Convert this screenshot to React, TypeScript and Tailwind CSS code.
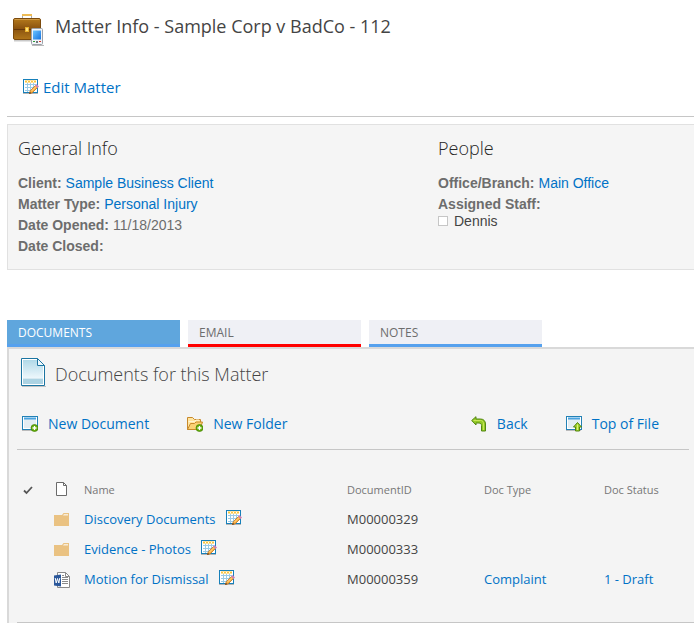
import type { ReactNode } from 'react'

type TDocument = {
  name: string
  kind: 'folder' | 'word'
  id: string
  type?: string
  status?: string
}

const documents: TDocument[] = [
  { name: 'Discovery Documents', kind: 'folder', id: 'M00000329' },
  { name: 'Evidence - Photos', kind: 'folder', id: 'M00000333' },
  {
    name: 'Motion for Dismissal',
    kind: 'word',
    id: 'M00000359',
    type: 'Complaint',
    status: '1 - Draft',
  },
]

function BriefcaseIcon() {
  return (
    <svg width="32" height="32" viewBox="0 0 32 32" aria-hidden="true">
      <defs>
        <linearGradient id="leather" x1="0" y1="0" x2="0" y2="1">
          <stop offset="0" stopColor="#b57a1c" />
          <stop offset="0.45" stopColor="#8d5510" />
          <stop offset="0.5" stopColor="#8a5310" />
          <stop offset="1" stopColor="#b0761a" />
        </linearGradient>
        <linearGradient id="screen" x1="0" y1="0" x2="1" y2="1">
          <stop offset="0" stopColor="#6cc4ff" />
          <stop offset="1" stopColor="#1674e0" />
        </linearGradient>
      </defs>
      <path d="M9.500 5V1h9v4" fill="none" stroke="#a9a9a9" />
      <path d="M9 1h10" stroke="#eebc55" strokeWidth="2" />
      <rect x="1" y="26" width="28" height="1.500" fill="#c9c9c9" />
      <rect x="0.500" y="4.500" width="27" height="21" rx="1.500" fill="url(#leather)" stroke="#7b4a0d" />
      <path d="M1.500 5.500h25" stroke="#cf9a45" />
      <path d="M1 15.500h26" stroke="#64370a" />
      <rect x="12.500" y="13.500" width="3" height="4" fill="#ffe27a" stroke="#e9b02c" />
      <path d="M19 31.500h12" stroke="#b9b9b9" />
      <rect x="18.500" y="14.500" width="11" height="16" rx="1" fill="#f2f4f7" stroke="#9aa1aa" />
      <rect x="20" y="16.500" width="8" height="9" fill="url(#screen)" />
      <path d="M20 27.500h2" stroke="#2d9c37" />
      <path d="M23 28h2" stroke="#707880" strokeWidth="2" />
      <path d="M26 27.500h2" stroke="#d7372a" />
    </svg>
  )
}

function EditIcon() {
  return (
    <svg width="16" height="16" viewBox="0 0 16 16" aria-hidden="true">
      <rect x="0.500" y="0.500" width="14" height="13" fill="#fff" stroke="#1780ba" />
      <path d="M0 14.500h15" stroke="#b5b5b5" />
      <path d="M2 2.500h11" stroke="#fac53b" strokeWidth="2" />
      <path d="M2 5.500h11M2 8.500h11M2 11.500h8M4.500 4v9M7.500 4v9M10.500 4v6" stroke="#9bcbe5" />
      <path d="M4.500 2v1M7.500 2v1M10.500 2v1" stroke="#fff" />
      <path d="M6.500 14.500l0.800-2.800 5.200-5.200 2 2-5.200 5.200z" fill="#fbb040" stroke="#bf7420" strokeWidth="0.800" />
      <path d="M8.300 12.300l4.700-4.700" stroke="#ffe0a0" strokeWidth="0.800" />
      <path d="M6 15l0.900-2.200 1.400 1.400z" fill="#684421" />
      <path d="M12 6.500L13.500 5 16 7.500l-1.500 1.500z" fill="#cc83b5" />
    </svg>
  )
}

function PageIcon() {
  return (
    <svg width="26" height="30" viewBox="0 0 26 30" aria-hidden="true">
      <defs>
        <linearGradient id="paper" x1="0" y1="0" x2="0" y2="1">
          <stop offset="0" stopColor="#b0d9e8" />
          <stop offset="1" stopColor="#edf7fc" />
        </linearGradient>
      </defs>
      <path d="M1 28.500h24" stroke="#c2c2c2" />
      <path d="M0.500 0.500h16l7 7v20h-23z" fill="#fff" stroke="#1b75a2" />
      <path d="M2 2h14v6h6v12H2z" fill="url(#paper)" />
      <path d="M2 20.500h20V26H2z" fill="#acd3e3" />
      <path d="M16.500 0.500v7h7z" fill="#eff8fc" stroke="#1b75a2" />
    </svg>
  )
}

function PlusBadge() {
  return (
    <>
      <circle cx="12.500" cy="12" r="3.500" fill="#66ad0c" stroke="#418100" strokeWidth="0.700" />
      <path d="M10.500 12h4M12.500 10v4" stroke="#fff" strokeWidth="1.300" />
    </>
  )
}

function WindowFrame() {
  return (
    <>
      <path d="M0 14.500h15" stroke="#bbb" />
      <rect x="0.500" y="0.500" width="15" height="13" fill="#e4edf2" stroke="#2381b5" />
      <rect x="1.500" y="1.500" width="13" height="11" fill="none" stroke="#fff" />
      <path d="M2 2.500h12" stroke="#49a3e0" strokeWidth="2" />
    </>
  )
}

function NewDocumentIcon() {
  return (
    <svg width="16" height="16" viewBox="0 0 16 16" aria-hidden="true">
      <WindowFrame />
      <PlusBadge />
    </svg>
  )
}

function NewFolderIcon() {
  return (
    <svg width="16" height="16" viewBox="0 0 16 16" aria-hidden="true">
      <path d="M0.500 13.500v-12h5l2 2h6v10z" fill="#ffe5a0" stroke="#c8892b" />
      <path d="M1.500 5.500h6l1.500-1.500h3" fill="none" stroke="#fff4d4" />
      <path d="M0.500 13.500l3-6h4l1.500-1.500h6.500l-2.500 7.500z" fill="#f9d274" stroke="#c8892b" />
      <PlusBadge />
    </svg>
  )
}

function BackIcon() {
  return (
    <svg width="16" height="16" viewBox="0 0 16 16" aria-hidden="true">
      <path
        d="M0.700 4.500L5 0.700V3h4.500c3 0 5 2 5 5v7h-4V9.500c0-1.500-1-2.500-2.500-2.500H5v2z"
        fill="#94c927"
        stroke="#528711"
      />
      <path d="M2.500 4.500h7c2 0 3 1.500 3 3.500v6" fill="none" stroke="#c6e758" />
    </svg>
  )
}

function TopOfFileIcon() {
  return (
    <svg width="16" height="16" viewBox="0 0 16 16" aria-hidden="true">
      <WindowFrame />
      <path
        d="M11.500 6.500l4 4.500h-2v4h-4v-4h-2z"
        fill="#a3d329"
        stroke="#518410"
      />
      <path d="M11.500 8.500v5.500" stroke="#d8ef78" />
    </svg>
  )
}

function CheckIcon() {
  return (
    <svg width="10" height="10" viewBox="0 0 10 10" aria-hidden="true">
      <path d="M1 4.500l2.500 2.500L9 1" fill="none" stroke="#555" strokeWidth="1.800" />
    </svg>
  )
}

function BlankFileIcon() {
  return (
    <svg width="12" height="14" viewBox="0 0 12 14" aria-hidden="true">
      <path d="M0.500 0.500h7l3 3v10h-10z" fill="#fff" stroke="#6b6b6b" />
      <path d="M7.500 0.500v3h3" fill="none" stroke="#6b6b6b" />
    </svg>
  )
}

function FolderIcon() {
  return (
    <svg width="16" height="14" viewBox="0 0 16 14" aria-hidden="true">
      <path d="M0 2h8l1.500-2H15v13H0z" fill="#eac282" />
      <path d="M9 2.500l1-1.500h4v1.500z" fill="#f8ecd8" />
    </svg>
  )
}

function WordIcon() {
  return (
    <svg width="16" height="16" viewBox="0 0 16 16" aria-hidden="true">
      <path d="M3.500 0.500h8l4 4v11h-12z" fill="#fff" stroke="#898989" />
      <path d="M11.500 0.500v4h4" fill="none" stroke="#898989" />
      <path d="M8 3.500h2M8 5.500h6M8 7.500h6M8 9.500h6M8 11.500h6" stroke="#8b8b8b" />
      <path d="M0 3.500l7-1v12l-7-1z" fill="#2a579a" />
      <path d="M1.200 6l1 5 1.300-4.500L4.800 11l1-5" fill="none" stroke="#fff" />
    </svg>
  )
}

function TextLink({ children }: { children: ReactNode }) {
  return (
    <a href="#" className="text-[#0072c6]">
      {children}
    </a>
  )
}

function Field({ label, children }: { label: string; children?: ReactNode }) {
  return (
    <div className="flex gap-x-1">
      <dt className="font-bold">{label}</dt>
      <dd>{children}</dd>
    </div>
  )
}

function ToolLink({ icon, label }: { icon: ReactNode; label: string }) {
  return (
    <a href="#" className="flex items-center gap-x-2.5 text-[#0072c6]">
      {icon}
      {label}
    </a>
  )
}

export default function App() {
  return (
    <main className="min-h-screen bg-white pl-[7px] font-['Open_Sans',sans-serif] text-[#444]">
      <header className="border-b border-[#c6c6c6] pt-3 pb-[15px]">
        <div className="flex items-center gap-x-2.5 pl-1.5">
          <BriefcaseIcon />
          <h1 className="pb-2 text-lg leading-7">
            Matter Info - Sample Corp v BadCo - 112
          </h1>
        </div>
        <a
          href="#"
          className="mt-[27px] ml-4 inline-flex items-center gap-x-1 text-[15px] leading-6 text-[#0072c6]"
        >
          <EditIcon />
          Edit Matter
        </a>
      </header>

      <section className="mt-[7px] flex border border-r-0 border-[#e1e1e1] bg-[#f5f5f5] px-2.5 pt-[9px] pb-3 font-['Liberation_Sans',sans-serif] text-sm text-[#6d6d6d]">
        <div className="w-[420px] shrink-0">
          <h2 className="mb-[11px] font-['Open_Sans',sans-serif] text-lg leading-7 font-light text-[#262626]">
            General Info
          </h2>
          <dl className="leading-[21px]">
            <Field label="Client:">
              <TextLink>Sample Business Client</TextLink>
            </Field>
            <Field label="Matter Type:">
              <TextLink>Personal Injury</TextLink>
            </Field>
            <Field label="Date Opened:">11/18/2013</Field>
            <Field label="Date Closed:" />
          </dl>
        </div>
        <div>
          <h2 className="mb-[11px] font-['Open_Sans',sans-serif] text-lg leading-7 font-light text-[#262626]">
            People
          </h2>
          <dl className="leading-[21px]">
            <Field label="Office/Branch:">
              <TextLink>Main Office</TextLink>
            </Field>
            <Field label="Assigned Staff:" />
          </dl>
          <label className="flex items-center gap-x-1.5 leading-3 text-[#444]">
            <input
              type="checkbox"
              className="size-2.5 appearance-none border border-[#c6c6c6] bg-white"
            />
            Dennis
          </label>
        </div>
      </section>

      <nav className="mt-[50px] flex gap-x-2 text-xs text-[#6d6d6d]">
        <button className="h-[27px] w-[173px] border-b-3 border-[#56a1ee] bg-[#5fa6dd] px-[11px] pt-0.5 text-left text-white">
          DOCUMENTS
        </button>
        <button className="h-[27px] w-[173px] border-b-3 border-[#f00] bg-[#eff0f5] px-[11px] pt-0.5 text-left">
          EMAIL
        </button>
        <button className="h-[27px] w-[173px] border-b-3 border-[#56a1ee] bg-[#eff0f5] px-[11px] pt-0.5 text-left">
          NOTES
        </button>
      </nav>

      <section className="border-t-2 border-l-2 border-[#d9d9d9] bg-[#f4f4f4] pl-2">
        <div className="flex items-center gap-x-2 pt-[7px] pl-1">
          <PageIcon />
          <h2 className="pt-0.5 text-lg leading-8 font-light">
            Documents for this Matter
          </h2>
        </div>
        <div className="mr-[5px] flex justify-between border-b border-[#c6c6c6] pt-[22px] pr-[30px] pb-[13px] pl-[5px] text-sm leading-6">
          <div className="flex gap-x-[38px]">
            <ToolLink icon={<NewDocumentIcon />} label="New Document" />
            <ToolLink icon={<NewFolderIcon />} label="New Folder" />
          </div>
          <div className="flex gap-x-[38px]">
            <ToolLink icon={<BackIcon />} label="Back" />
            <ToolLink icon={<TopOfFileIcon />} label="Top of File" />
          </div>
        </div>

        <div className="border-b border-[#c6c6c6] pt-[26px] pb-[27px]">
          <table className="w-full table-fixed text-left text-[13px]">
            <thead className="text-[11px] text-[#777]">
              <tr className="h-[29px]">
                <th className="w-[35px] pl-1.5" aria-label="Select">
                  <CheckIcon />
                </th>
                <th className="w-8 pb-1 pl-1" aria-label="Type">
                  <BlankFileIcon />
                </th>
                <th className="font-normal">Name</th>
                <th className="w-[137px] font-normal">DocumentID</th>
                <th className="w-[120px] font-normal">Doc Type</th>
                <th className="w-[90px] font-normal">Doc Status</th>
              </tr>
            </thead>
            <tbody>
              {documents.map((doc) => (
                <tr key={doc.id} className="h-[30px]">
                  <td />
                  <td className="pl-0.5">
                    {doc.kind === 'folder' ? <FolderIcon /> : <WordIcon />}
                  </td>
                  <td>
                    <div className="flex items-center gap-x-2.5">
                      <TextLink>{doc.name}</TextLink>
                      <button className="pb-1" aria-label={`Edit ${doc.name}`}>
                        <EditIcon />
                      </button>
                    </div>
                  </td>
                  <td>{doc.id}</td>
                  <td>{doc.type && <TextLink>{doc.type}</TextLink>}</td>
                  <td>{doc.status && <TextLink>{doc.status}</TextLink>}</td>
                </tr>
              ))}
            </tbody>
          </table>
        </div>
      </section>
    </main>
  )
}
